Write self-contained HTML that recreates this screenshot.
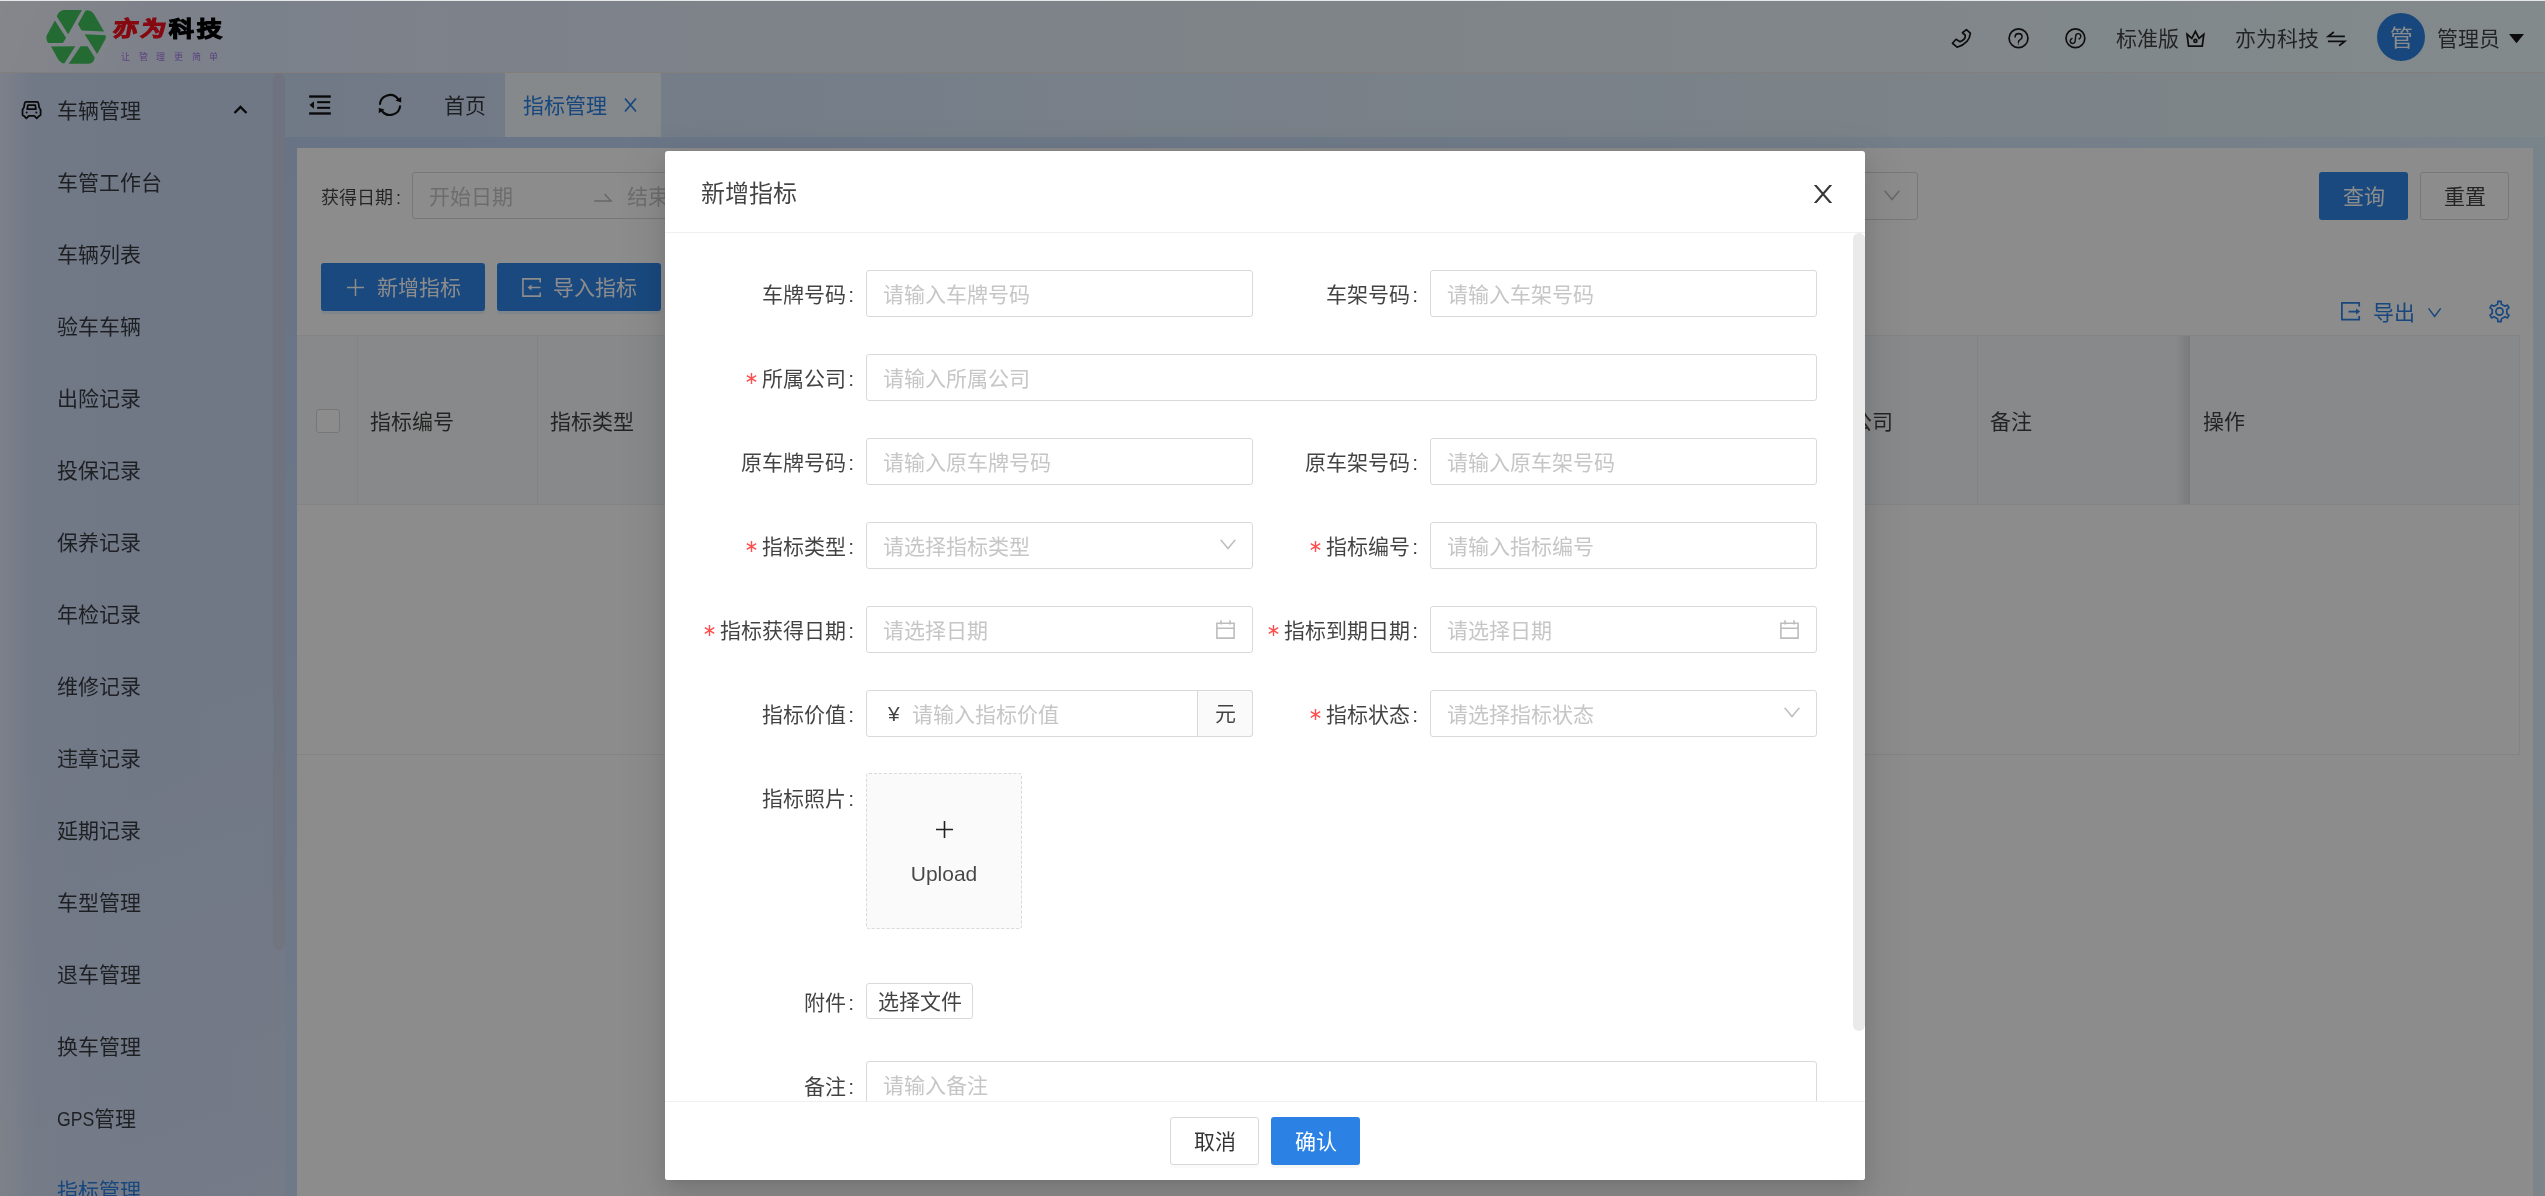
<!DOCTYPE html>
<html lang="zh-CN">
<head>
<meta charset="utf-8">
<title>指标管理</title>
<style>
*{box-sizing:border-box;margin:0;padding:0}
html,body{width:2545px;height:1196px;overflow:hidden}
body{font-family:"Liberation Sans",sans-serif;font-size:21px;color:rgba(0,0,0,.74);position:relative;
background:#dfe8f8;}
.abs{position:absolute}
svg{display:block;overflow:visible}
/* ---------- header ---------- */
#hdr{left:0;top:0;width:2545px;height:73px;border-bottom:1px solid rgba(236,228,222,.9);background:linear-gradient(115deg,rgba(255,255,255,.5) 0,rgba(255,255,255,0) 140px),linear-gradient(90deg,#e9edfb 0px,#e1ebfd 250px,#e5eefb 700px,#e7f0f9 1300px,#ebf5fd 1900px,#eefbff 2545px)}
#topline{left:0;top:0;width:2545px;height:1px;background:#e5e7e8}
/* ---------- sidebar ---------- */
#side{left:0;top:73px;width:285px;height:1123px;background:linear-gradient(160deg,rgba(255,255,255,0) 55%,rgba(255,255,255,.16) 100%),linear-gradient(90deg,#e1e9fb 0px,#cfdcf5 35px,#ccdaf5 140px,#cddaf4 285px)}
#side .it{position:absolute;left:57px;height:30px;line-height:30px;font-size:21px;white-space:nowrap}
#sbar{left:273px;top:73px;width:12px;height:877px;border-radius:6px;background:rgba(140,110,90,.07)}
/* ---------- main ---------- */
#main{left:285px;top:73px;width:2260px;height:1123px;background:linear-gradient(180deg,rgba(255,255,255,0) 0,rgba(255,255,255,.24) 100%),linear-gradient(90deg,#bdd3f5 0px,#c8dcf9 900px,#dceefb 2260px)}
#tabs{left:285px;top:73px;width:2260px;height:64px;background:linear-gradient(90deg,#cddcf5 0px,#d8e7f9 615px,#deecf9 1260px,#e7f5f9 2260px)}
#tabact{left:505px;top:73px;width:156px;height:64px;background:#f2f9ff}
#panel{left:297px;top:148px;width:2236px;height:1060px;background:#fff}
.t21{font-size:21px;line-height:30px;white-space:nowrap}
.t18{font-size:18px;line-height:28px;white-space:nowrap}
.btnp{background:#2f85e6;color:#fff;border-radius:3px;text-align:center;font-size:21px;white-space:nowrap}
.inp{border:1px solid #d9d9d9;border-radius:3px;background:#fff}
.ph{color:#c6c6c6}
/* ---------- mask ---------- */
#mask{left:0;top:0;width:2545px;height:1196px;background:rgba(0,0,0,.45)}
/* ---------- modal ---------- */
#modal{left:665px;top:151px;width:1200px;height:1029px;background:#fff;border-radius:3px;
 will-change:transform;
 box-shadow:0 9px 24px 0 rgba(0,0,0,.10),0 4px 9px -6px rgba(0,0,0,.14),0 14px 42px 12px rgba(0,0,0,.07)}
#modal .hd{left:0;top:0;width:1200px;height:82px;border-bottom:1px solid #f0f0f0}
#modal .ft{left:0;top:950px;width:1200px;height:79px;border-top:1px solid #f0f0f0;background:#fff;border-radius:0 0 3px 3px}
#mbody{left:0;top:82px;width:1200px;height:868px;overflow:hidden}
.lbl{position:absolute;width:201px;height:47px;line-height:50px;font-size:21px;text-align:right;white-space:nowrap;color:rgba(0,0,0,.74)}
.lbl b{font-weight:normal;margin:0 12px 0 2px}
.lbl .ast{display:inline-block;margin-right:5px;vertical-align:2px}
.fi{position:absolute;height:47px;border:1px solid #d9d9d9;border-radius:3px;background:#fff;font-size:21px;line-height:47px;padding-left:16px;color:#c6c6c6;white-space:nowrap;overflow:hidden}
</style>
</head>
<body>
<div id="bgw" style="position:absolute;left:0;top:0;width:2545px;height:1196px;will-change:transform">
<div id="hdr" class="abs"></div>
<div id="side" class="abs"></div>
<div id="main" class="abs"></div>
<div id="tabs" class="abs"></div>
<div id="tabact" class="abs"></div>
<div id="panel" class="abs"></div>
<!-- logo icon: region [40,4,120,70] zoom 18.125 -->
<svg class="abs" style="left:40px;top:4px" width="80" height="66" viewBox="0 0 1450 1196">
 <g fill="#41c45c">
  <path d="M305 225Q330 130 430 108L760 108L510 548Z"/>
  <path d="M822 122Q900 95 975 175L1160 500L755 478L688 368Z"/>
  <path d="M808 548L1190 566Q1205 600 1180 650L1035 908Z"/>
  <path d="M735 765L862 765L990 970Q980 1075 880 1082L520 1082Z"/>
  <path d="M200 772L640 765L440 1078Q390 1080 330 1005Z"/>
  <path d="M270 298L472 612L415 706L150 706Q95 640 125 560Z"/>
 </g>
</svg>
<div class="abs" id="lg1" style="left:113px;top:11px;font-size:21px;line-height:36px;font-weight:900;letter-spacing:2.6px;white-space:nowrap;color:#000;-webkit-text-stroke:1.2px #000;transform:scaleX(1.18);transform-origin:0 0"><span style="color:#f5101e;-webkit-text-stroke:1.2px #f5101e;display:inline-block;transform:skewX(-9deg)">亦为</span>科技</div>
<div class="abs" id="lg2" style="left:121px;top:50px;font-size:9px;line-height:14px;letter-spacing:8.7px;white-space:nowrap;color:#9a64e3;opacity:.85">让管理更简单</div>

<!-- header right icons: region [1940,14,2100,64] zoom 15.9 -->
<svg class="abs" style="left:1940px;top:14px" width="160" height="50" viewBox="0 0 2545 795" fill="none" stroke="#1a1a1a" stroke-width="27" stroke-linejoin="round" stroke-linecap="round">
 <path d="M420 248L483 305Q470 470 272 528L198 465L255 402L318 440Q410 405 402 338L357 298Z"/>
 <circle cx="1249" cy="386" r="150"/>
 <path d="M1195 365Q1195 312 1250 312Q1305 312 1305 360Q1305 395 1270 412Q1248 425 1248 450" stroke-width="24"/>
 <circle cx="1247" cy="478" r="10" fill="#1a1a1a" stroke="none"/>
 <circle cx="2154" cy="386" r="150"/>
 <path d="M2212 398Q2242 385 2240 348Q2236 312 2200 312Q2160 312 2158 352L2150 430Q2146 468 2110 468Q2072 468 2072 430Q2072 398 2100 390" stroke-width="23"/>
</svg>
<div class="abs t21" style="left:2116px;top:24px">标准版</div>
<!-- crown + swap: region [2105,14,2365,64] zoom 9.79 -->
<svg class="abs" style="left:2105px;top:14px" width="260" height="50" viewBox="0 0 2545 489" fill="none" stroke="#1a1a1a" stroke-width="17" stroke-linejoin="miter">
 <path d="M803 198L850 238L885 170L920 238L967 198L952 315L818 315Z"/>
 <circle cx="885" cy="263" r="14"/>
 <path d="M2348 218L2186 218L2240 176M2182 268L2346 268L2292 310" stroke-width="17"/>
</svg>
<div class="abs t21" style="left:2235px;top:24px">亦为科技</div>
<div class="abs" style="left:2377px;top:13px;width:48px;height:48px;border-radius:50%;background:#2a82e4;color:#fff;font-size:23px;line-height:51px;text-align:center">管</div>
<div class="abs t21" style="left:2437px;top:24px">管理员</div>
<svg class="abs" style="left:2509px;top:34px" width="15" height="10" viewBox="0 0 15 10"><path d="M0 0H15L7.5 9.3Z" fill="#151515"/></svg>

<!-- sidebar -->
<div id="sbar" class="abs"></div>
<!-- car icon: region [14,90,64,130] zoom 29.9 -->
<svg class="abs" style="left:14px;top:90px" width="50" height="40" viewBox="0 0 1495 1196" fill="none" stroke="#111" stroke-width="52" stroke-linejoin="round">
 <path d="M350 355L700 355Q725 360 732 400L752 520L795 590L795 745L752 775L680 850L608 775L442 775L370 850L298 775L255 745L255 590L298 520L318 400Q325 360 350 355Z"/>
 <path d="M415 455L635 455L655 575L395 575Z"/>
 <circle cx="378" cy="672" r="30" fill="#111" stroke="none"/><circle cx="668" cy="672" r="30" fill="#111" stroke="none"/>
</svg>
<svg class="abs" style="left:233px;top:105px" width="15" height="10" viewBox="0 0 15 10"><path d="M1.5 8L7.5 2L13.5 8" fill="none" stroke="#111" stroke-width="2.3"/></svg>
<div class="abs t21 sd" style="left:57px;top:96px">车辆管理</div>
<div class="abs t21 sd" style="left:57px;top:168px">车管工作台</div>
<div class="abs t21 sd" style="left:57px;top:240px">车辆列表</div>
<div class="abs t21 sd" style="left:57px;top:312px">验车车辆</div>
<div class="abs t21 sd" style="left:57px;top:384px">出险记录</div>
<div class="abs t21 sd" style="left:57px;top:456px">投保记录</div>
<div class="abs t21 sd" style="left:57px;top:528px">保养记录</div>
<div class="abs t21 sd" style="left:57px;top:600px">年检记录</div>
<div class="abs t21 sd" style="left:57px;top:672px">维修记录</div>
<div class="abs t21 sd" style="left:57px;top:744px">违章记录</div>
<div class="abs t21 sd" style="left:57px;top:816px">延期记录</div>
<div class="abs t21 sd" style="left:57px;top:888px">车型管理</div>
<div class="abs t21 sd" style="left:57px;top:960px">退车管理</div>
<div class="abs t21 sd" style="left:57px;top:1032px">换车管理</div>
<div class="abs t21 sd" style="left:57px;top:1104px"><span style="display:inline-block;transform:scaleX(.84);transform-origin:0 50%;margin-right:-7px">GPS</span>管理</div>
<div class="abs t21" style="left:57px;top:1176px;color:#2a82e4">指标管理</div>

<!-- tabs icons: region [295,80,415,130] zoom 21.2 -->
<svg class="abs" style="left:295px;top:80px" width="120" height="50" viewBox="0 0 2545 1060" fill="#111" stroke="none">
 <rect x="300" y="325" width="460" height="50"/><rect x="470" y="448" width="275" height="44"/><rect x="470" y="568" width="275" height="44"/><rect x="300" y="685" width="460" height="50"/>
 <path d="M308 530L402 452L402 608Z"/>
 <g fill="none" stroke="#111" stroke-width="46"><path d="M1800 525A215 215 0 0 1 2190 408"/><path d="M2230 540A215 215 0 0 1 1842 652"/></g>
 <path d="M2130 432L2252 362L2252 478Z"/><path d="M1900 628L1778 592L1778 704Z"/>
</svg>
<div class="abs t21" style="left:444px;top:91px">首页</div>
<div class="abs t21" style="left:523px;top:91px;color:#2a82e4">指标管理</div>
<svg class="abs" style="left:624px;top:98px" width="13" height="14" viewBox="0 0 13 14"><path d="M1 0.5L12 13.5M12 0.5L1 13.5" stroke="#2a82e4" stroke-width="1.7" fill="none"/></svg>

<!-- search row -->
<div class="abs t18" style="left:321px;top:184px">获得日期<span style="margin-left:3px">:</span></div>
<div class="abs inp" style="left:412px;top:172px;width:700px;height:47px"></div>
<div class="abs t21 ph" style="left:429px;top:182px">开始日期</div>
<svg class="abs" style="left:594px;top:193px" width="18" height="9" viewBox="0 0 18 9"><path d="M0.3 8H17L10.5 1" fill="none" stroke="#bdbdbd" stroke-width="1.5"/></svg>
<div class="abs t21 ph" style="left:627px;top:182px">结束日期</div>
<div class="abs inp" style="left:1500px;top:172px;width:418px;height:48px"></div>
<svg class="abs" style="left:1884px;top:190px" width="16" height="11" viewBox="0 0 16 11"><path d="M0.7 0.8L8 9.6L15.3 0.8" stroke="#bdbdbd" stroke-width="1.5" fill="none"/></svg>
<div class="abs btnp" style="left:2319px;top:172px;width:89px;height:48px;line-height:49px">查询</div>
<div class="abs inp" style="left:2420px;top:172px;width:89px;height:48px;line-height:48px;text-align:center;font-size:21px;color:rgba(0,0,0,.74)">重置</div>

<!-- toolbar -->
<div class="abs btnp" style="left:321px;top:263px;width:164px;height:48px;line-height:49px;padding-left:32px;box-shadow:0 3px 0 rgba(5,145,255,.1)">新增指标</div>
<svg class="abs" style="left:347px;top:279px" width="17" height="17" viewBox="0 0 17 17"><path d="M8.5 0V17M0 8.5H17" stroke="#fff" stroke-width="1.5" fill="none"/></svg>
<div class="abs btnp" style="left:497px;top:263px;width:164px;height:48px;line-height:49px;padding-left:32px;box-shadow:0 3px 0 rgba(5,145,255,.1)">导入指标</div>
<svg class="abs" style="left:522px;top:278px" width="19" height="19" viewBox="0 0 19 19" fill="none" stroke="#fff" stroke-width="1.6"><path d="M18.2 4.5V0.9H0.9V18.1H18.2V14.5M18.5 9.5H8"/><path d="M5.5 9.5L9.5 6.6V12.4Z" fill="#fff" stroke="none"/></svg>
<!-- export: region [2325,285,2525,340] zoom 12.725 -->
<svg class="abs" style="left:2325px;top:285px" width="200" height="55" viewBox="0 0 2545 700" fill="none" stroke="#2a82e4" stroke-width="22">
 <path d="M435 275L435 228L215 228L215 440L435 440L435 395M300 338L410 338"/>
 <path d="M448 338L395 300L395 376Z" fill="#2a82e4" stroke="none"/>
 <path d="M1318 297L1395 400L1472 297" stroke-width="19"/>
</svg>
<div class="abs t21" style="left:2373px;top:298px;color:#2a82e4">导出</div>
<!-- gear -->
<svg class="abs" style="left:2488px;top:300px" width="23" height="23" viewBox="-11.5 -11.5 23 23" fill="none" stroke="#2a82e4" stroke-width="1.7" stroke-linejoin="round">
 <path d="M-1.81 -7.38L-1.60 -10.07L1.60 -10.07L1.81 -7.38L5.49 -5.26L7.93 -6.42L9.52 -3.66L7.30 -2.12L7.30 2.12L9.52 3.66L7.93 6.42L5.49 5.26L1.81 7.38L1.60 10.07L-1.60 10.07L-1.81 7.38L-5.49 5.26L-7.93 6.42L-9.52 3.66L-7.30 2.12L-7.30 -2.12L-9.52 -3.66L-7.93 -6.42L-5.49 -5.26Z"/><circle cx="0" cy="0" r="3.6"/>
</svg>

<!-- table -->
<div class="abs" style="left:297px;top:335px;width:2223px;height:170px;background:#f8f9fb;border-top:1px solid #f0f0f0;border-bottom:1px solid #f0f0f0"></div>
<div class="abs" style="left:357px;top:336px;width:1px;height:168px;background:#f0f0f0"></div>
<div class="abs" style="left:537px;top:336px;width:1px;height:168px;background:#f0f0f0"></div>
<div class="abs" style="left:1977px;top:336px;width:1px;height:168px;background:#f0f0f0"></div>
<div class="abs" style="left:2519px;top:336px;width:1px;height:419px;background:#f0f0f0"></div>
<div class="abs" style="left:297px;top:754px;width:2223px;height:1px;background:#f0f0f0"></div>
<div class="abs" style="left:2176px;top:336px;width:14px;height:168px;background:linear-gradient(90deg,rgba(0,0,0,0),rgba(0,0,0,.11))"></div>
<div class="abs" style="left:316px;top:409px;width:24px;height:24px;border:1px solid #d9d9d9;border-radius:3px;background:#fff"></div>
<div class="abs t21" style="left:370px;top:407px">指标编号</div>
<div class="abs t21" style="left:550px;top:407px">指标类型</div>
<div class="abs t21" style="left:1851px;top:407px">公司</div>
<div class="abs t21" style="left:1990px;top:407px">备注</div>
<div class="abs t21" style="left:2203px;top:407px">操作</div>

</div>
<div id="mask" class="abs"></div>
<div id="topline" class="abs"></div>
<div id="modal" class="abs">
<div class="abs hd"></div>
<div class="abs" style="left:36px;top:26px;font-size:24px;line-height:33px;white-space:nowrap;color:rgba(0,0,0,.74)">新增指标</div>
<svg class="abs" style="left:1149px;top:34px;overflow:hidden" width="18" height="18" viewBox="0 0 18 18"><path d="M0.4 -1L17.6 19M17.6 -1L0.4 19" stroke="#383838" stroke-width="2.1" fill="none"/></svg>
<div id="mbody" class="abs">
 <div class="lbl" style="left:0;top:37px">车牌号码<b>:</b></div>
 <div class="fi" style="left:201px;top:37px;width:387px">请输入车牌号码</div>
 <div class="lbl" style="left:564px;top:37px">车架号码<b>:</b></div>
 <div class="fi" style="left:765px;top:37px;width:387px">请输入车架号码</div>

 <div class="lbl" style="left:0;top:121px"><svg class="ast" width="11" height="11" viewBox="0 0 11 11"><path d="M5.5 0V11M0.8 2.6L10.2 8.4M10.2 2.6L0.8 8.4" stroke="#ff4d4f" stroke-width="1.4" fill="none"/></svg>所属公司<b>:</b></div>
 <div class="fi" style="left:201px;top:121px;width:951px">请输入所属公司</div>

 <div class="lbl" style="left:0;top:205px">原车牌号码<b>:</b></div>
 <div class="fi" style="left:201px;top:205px;width:387px">请输入原车牌号码</div>
 <div class="lbl" style="left:564px;top:205px">原车架号码<b>:</b></div>
 <div class="fi" style="left:765px;top:205px;width:387px">请输入原车架号码</div>

 <div class="lbl" style="left:0;top:289px"><svg class="ast" width="11" height="11" viewBox="0 0 11 11"><path d="M5.5 0V11M0.8 2.6L10.2 8.4M10.2 2.6L0.8 8.4" stroke="#ff4d4f" stroke-width="1.4" fill="none"/></svg>指标类型<b>:</b></div>
 <div class="fi" style="left:201px;top:289px;width:387px">请选择指标类型</div>
 <svg class="abs chev" style="left:555px;top:306px" width="16" height="11" viewBox="0 0 16 11"><path d="M0.7 0.8L8 9.6L15.3 0.8" stroke="#bdbdbd" stroke-width="1.5" fill="none"/></svg>
 <div class="lbl" style="left:564px;top:289px"><svg class="ast" width="11" height="11" viewBox="0 0 11 11"><path d="M5.5 0V11M0.8 2.6L10.2 8.4M10.2 2.6L0.8 8.4" stroke="#ff4d4f" stroke-width="1.4" fill="none"/></svg>指标编号<b>:</b></div>
 <div class="fi" style="left:765px;top:289px;width:387px">请输入指标编号</div>

 <div class="lbl" style="left:0;top:373px"><svg class="ast" width="11" height="11" viewBox="0 0 11 11"><path d="M5.5 0V11M0.8 2.6L10.2 8.4M10.2 2.6L0.8 8.4" stroke="#ff4d4f" stroke-width="1.4" fill="none"/></svg>指标获得日期<b>:</b></div>
 <div class="fi" style="left:201px;top:373px;width:387px">请选择日期</div>
 <svg class="abs" style="left:551px;top:387px" width="19" height="19" viewBox="0 0 19 19"><path d="M0.9 3.2H18.1V18.1H0.9ZM0.9 8.3H18.1M5 0.3V4.6M14 0.3V4.6" stroke="#bdbdbd" stroke-width="1.6" fill="none"/></svg>
 <div class="lbl" style="left:564px;top:373px"><svg class="ast" width="11" height="11" viewBox="0 0 11 11"><path d="M5.5 0V11M0.8 2.6L10.2 8.4M10.2 2.6L0.8 8.4" stroke="#ff4d4f" stroke-width="1.4" fill="none"/></svg>指标到期日期<b>:</b></div>
 <div class="fi" style="left:765px;top:373px;width:387px">请选择日期</div>
 <svg class="abs" style="left:1115px;top:387px" width="19" height="19" viewBox="0 0 19 19"><path d="M0.9 3.2H18.1V18.1H0.9ZM0.9 8.3H18.1M5 0.3V4.6M14 0.3V4.6" stroke="#bdbdbd" stroke-width="1.6" fill="none"/></svg>

 <div class="lbl" style="left:0;top:457px">指标价值<b>:</b></div>
 <div class="fi" style="left:201px;top:457px;width:387px;padding-left:45px">请输入指标价值</div>
 <div class="abs" style="left:223px;top:457px;height:47px;line-height:48px;font-size:21px;color:rgba(0,0,0,.74)">¥</div>
 <div class="abs" style="left:532px;top:457px;width:56px;height:47px;border:1px solid #d9d9d9;border-radius:0 3px 3px 0;background:#fafafa;line-height:46px;text-align:center;font-size:21px;color:rgba(0,0,0,.74)">元</div>
 <div class="lbl" style="left:564px;top:457px"><svg class="ast" width="11" height="11" viewBox="0 0 11 11"><path d="M5.5 0V11M0.8 2.6L10.2 8.4M10.2 2.6L0.8 8.4" stroke="#ff4d4f" stroke-width="1.4" fill="none"/></svg>指标状态<b>:</b></div>
 <div class="fi" style="left:765px;top:457px;width:387px">请选择指标状态</div>
 <svg class="abs chev" style="left:1119px;top:474px" width="16" height="11" viewBox="0 0 16 11"><path d="M0.7 0.8L8 9.6L15.3 0.8" stroke="#bdbdbd" stroke-width="1.5" fill="none"/></svg>

 <div class="lbl" style="left:0;top:541px">指标照片<b>:</b></div>
 <div class="abs" style="left:201px;top:540px;width:156px;height:156px;border:1px dashed #d9d9d9;border-radius:3px;background:#fafafa"></div>
 <svg class="abs" style="left:271px;top:588px" width="17" height="17" viewBox="0 0 17 17"><path d="M8.5 0V17M0 8.5H17" stroke="#222" stroke-width="1.6" fill="none"/></svg>
 <div class="abs" style="left:201px;top:626px;width:156px;text-align:center;font-size:21px;line-height:30px;color:rgba(0,0,0,.72)">Upload</div>

 <div class="lbl" style="left:0;top:745px">附件<b>:</b></div>
 <div class="abs" style="left:201px;top:750px;width:107px;height:36px;border:1px solid #d9d9d9;border-radius:3px;background:#fff;font-size:21px;line-height:35px;text-align:center;white-space:nowrap;color:rgba(0,0,0,.74)">选择文件</div>

 <div class="lbl" style="left:0;top:829px">备注<b>:</b></div>
 <div class="fi" style="left:201px;top:828px;width:951px;height:60px">请输入备注</div>

 <div class="abs" style="left:1188px;top:0;width:12px;height:798px;border-radius:6px;background:#eaeaea"></div>
</div>
<div class="abs ft"></div>
<div class="abs" style="left:505px;top:966px;width:89px;height:48px;border:1px solid #d9d9d9;border-radius:3px;background:#fff;font-size:21px;line-height:48px;text-align:center;color:rgba(0,0,0,.8);box-shadow:0 3px 0 rgba(0,0,0,.02)">取消</div>
<div class="abs" style="left:606px;top:966px;width:89px;height:48px;border-radius:3px;background:#2b82e4;color:#fff;font-size:21px;line-height:50px;text-align:center;box-shadow:0 3px 0 rgba(0,0,0,.04)">确认</div>

</div>
</body>
</html>
